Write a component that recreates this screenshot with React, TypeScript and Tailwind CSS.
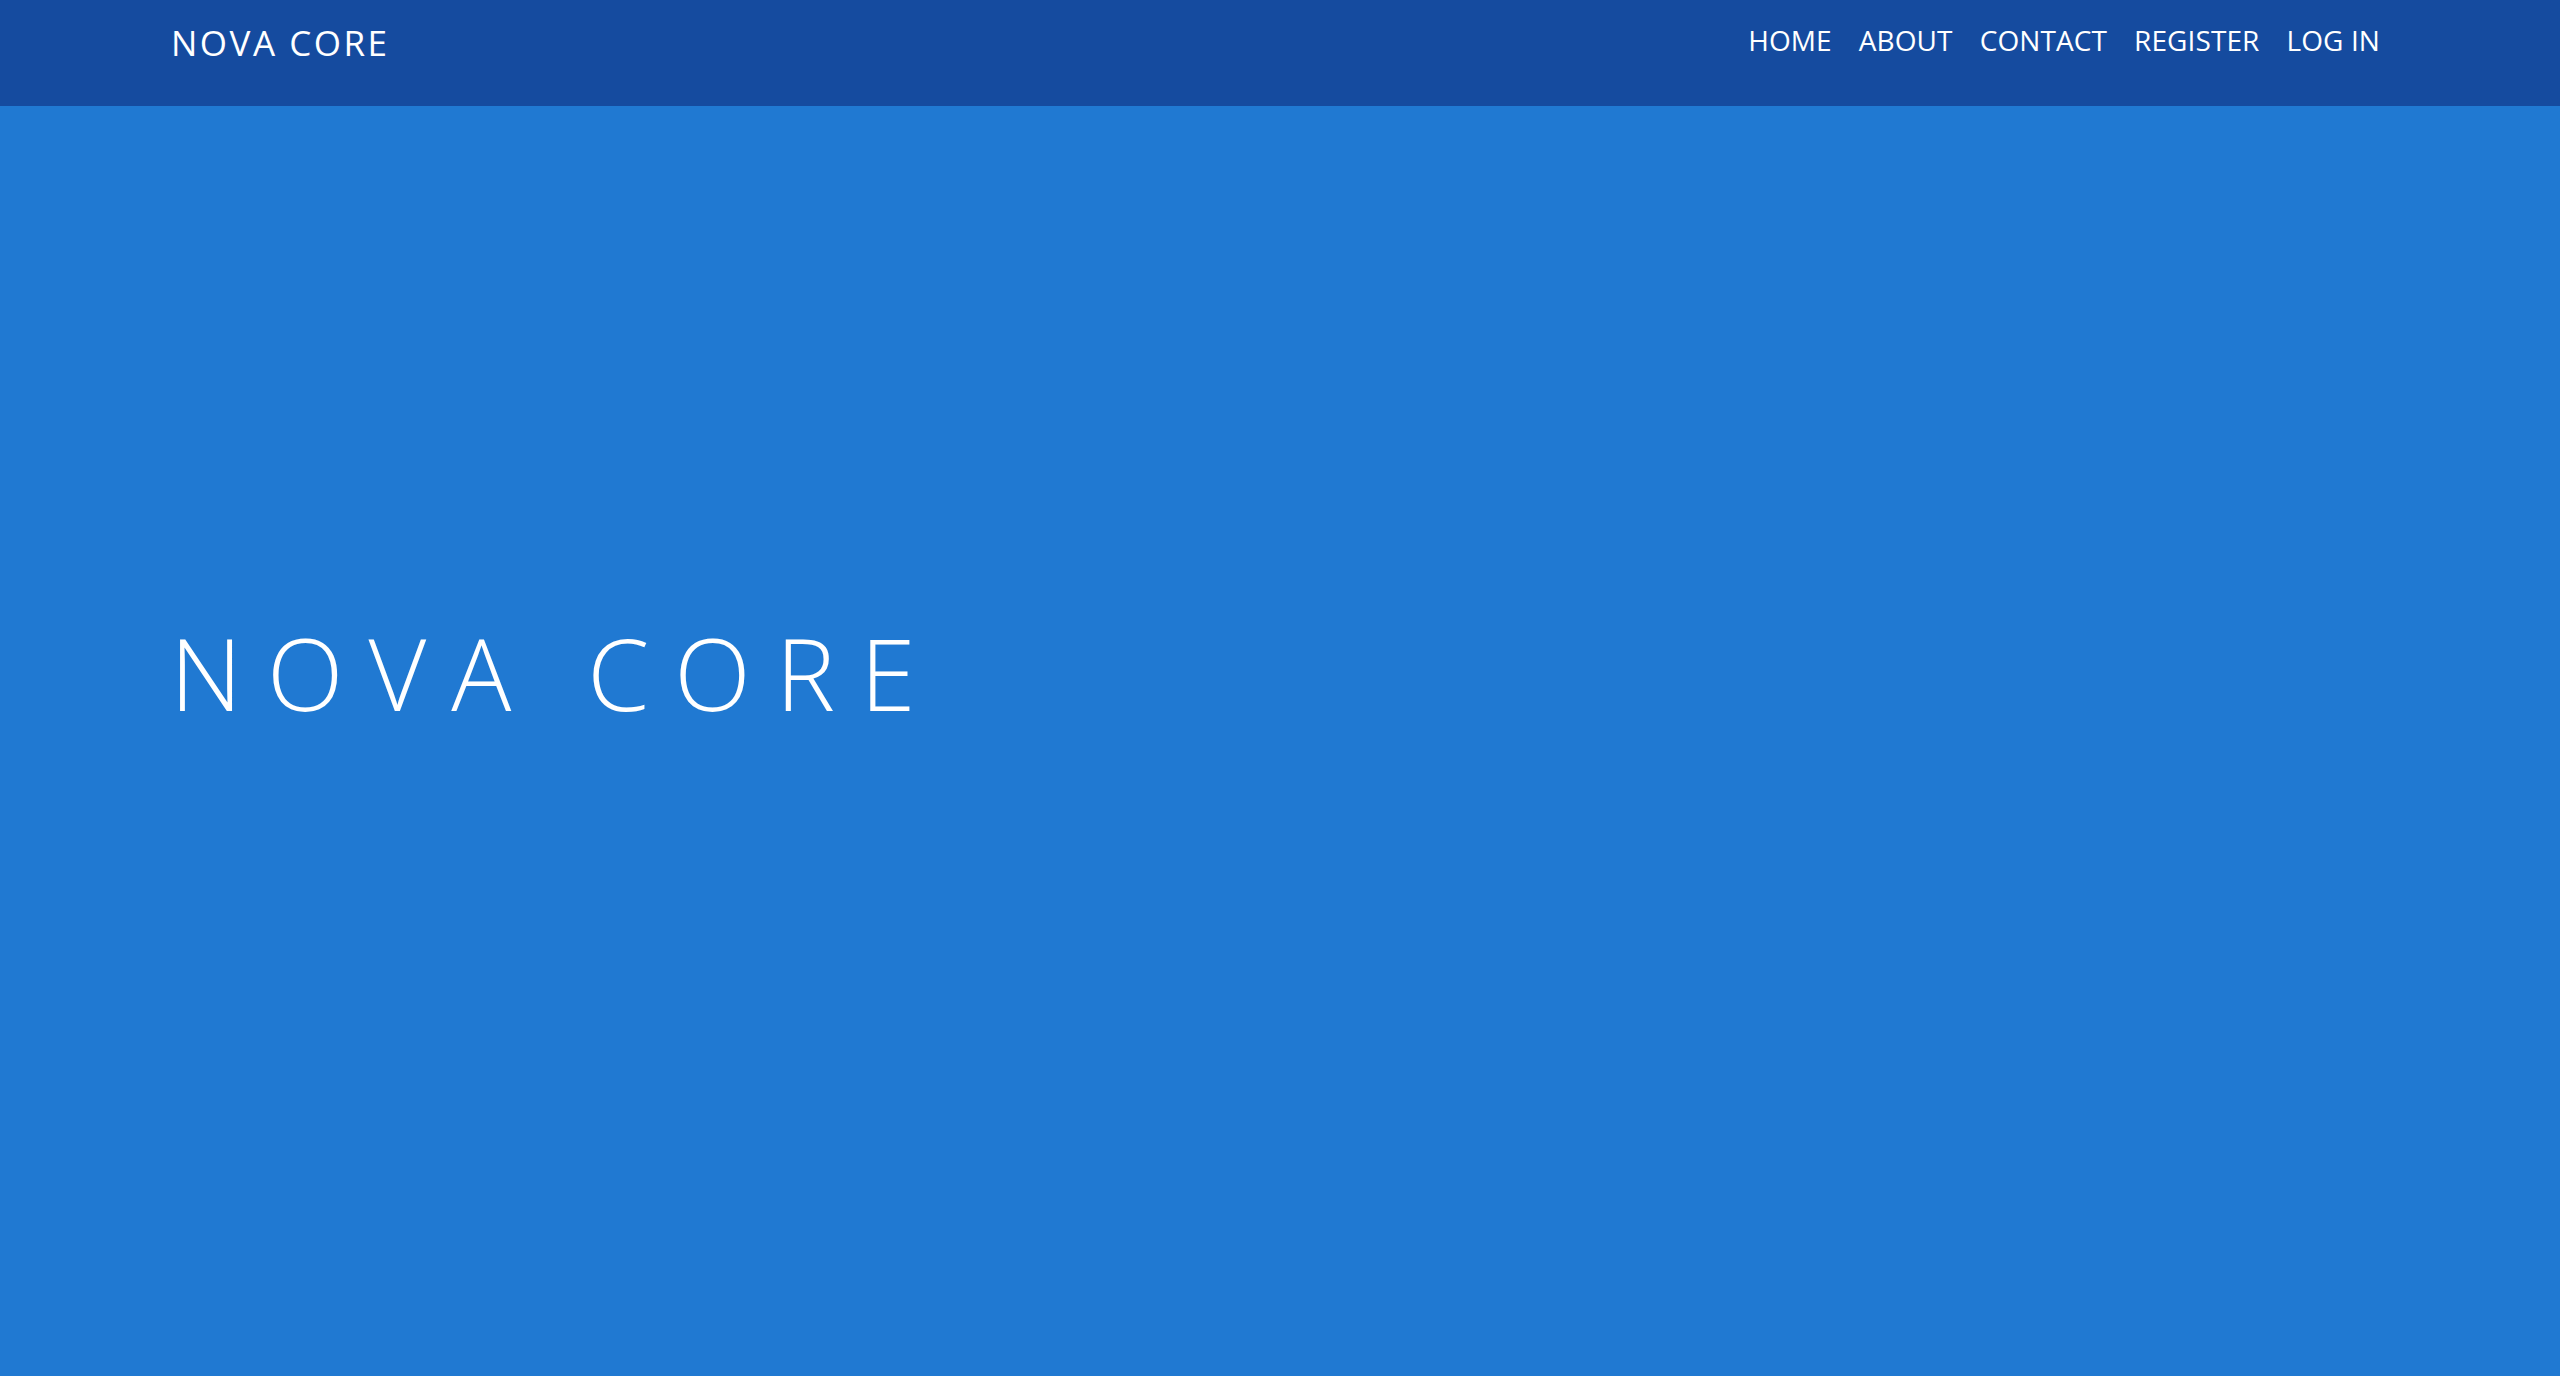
import React from "react";

export default function App() {
  const links = ["HOME", "ABOUT", "CONTACT", "REGISTER", "LOG IN"];
  return (
    <div className="min-h-screen w-full bg-[#2079d2]" style={{ fontFamily: '"Open Sans", "Noto Sans", sans-serif' }}>
      <header className="h-[106px] w-full bg-[#154b9f]">
        <div className="flex items-start justify-between pl-[171px] pr-[180px]">
          <a className="mt-[25px] text-[35px] leading-none font-normal text-white tracking-[2.5px]">NOVA CORE</a>
          <nav className="mt-[26px] flex items-start gap-[27px]">
            {links.map((l) => (
              <a key={l} className="text-[28px] leading-none font-normal text-white tracking-[0.1px]">
                {l}
              </a>
            ))}
          </nav>
        </div>
      </header>
      <main className="h-[1270px] px-[170px]">
        <h1 className="pt-[516px] text-[100px] leading-none font-light text-white tracking-[25px] whitespace-nowrap">
          NOVA CORE
        </h1>
      </main>
    </div>
  );
}
